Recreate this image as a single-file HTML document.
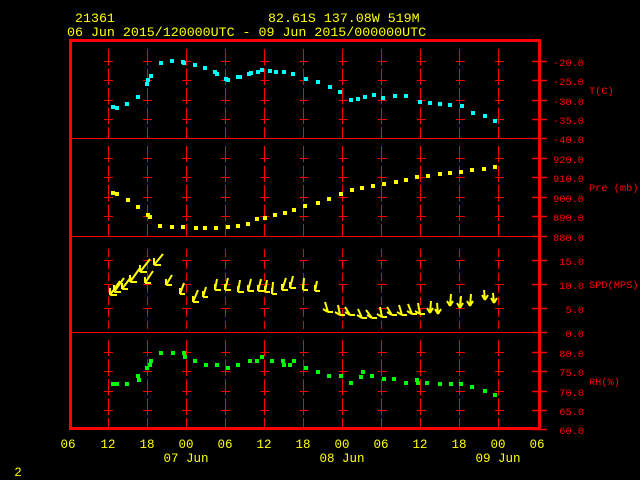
<!DOCTYPE html>
<html><head><meta charset="utf-8"><style>
html,body{margin:0;padding:0;background:#000;width:640px;height:480px;overflow:hidden}
svg{display:block}
text{font-family:"Liberation Mono",monospace}
</style></head><body>
<svg width="640" height="480" viewBox="0 0 640 480" xmlns="http://www.w3.org/2000/svg">
<g fill="#ffff00" font-size="13.3">
<text x="75" y="22">21361</text>
<text x="268" y="22">82.61S  137.08W   519M</text>
<text x="67" y="36">06 Jun 2015/120000UTC - 09 Jun 2015/000000UTC</text>
</g>
<!-- grid -->
<g stroke="#ff0000" stroke-width="1" fill="none">
<path stroke-dasharray="16.5 3" d="M108.5 49V138M147.5 49V138M186.5 49V138M225.5 49V138M264.5 49V138M303.5 49V138M342.5 49V138M381.5 49V138M420.5 49V138M459.5 49V138M498.5 49V138"/>
<path stroke-dasharray="16.5 3" d="M108.5 146V236M147.5 146V236M186.5 146V236M225.5 146V236M264.5 146V236M303.5 146V236M342.5 146V236M381.5 146V236M420.5 146V236M459.5 146V236M498.5 146V236"/>
<path stroke-dasharray="8 4" d="M108.5 249V332M147.5 249V332M186.5 249V332M225.5 249V332M264.5 249V332M303.5 249V332M342.5 249V332M381.5 249V332M420.5 249V332M459.5 249V332M498.5 249V332"/>
<path stroke-dasharray="16.5 3" d="M108.5 340V429M147.5 340V429M186.5 340V429M225.5 340V429M264.5 340V429M303.5 340V429M342.5 340V429M381.5 340V429M420.5 340V429M459.5 340V429M498.5 340V429"/>
<path stroke-dasharray="9 30.1" d="M104 61.5H510M104 80.5H510M104 100.5H510M104 119.5H510M104 158.5H510M104 177.5H510M104 197.5H510M104 216.5H510M104 260.5H510M104 284.5H510M104 308.5H510M104 352.5H510M104 371.5H510M104 391.5H510M104 410.5H510"/>
<path d="M72 138.5H538M72 236.5H538M72 332.5H538"/>
<path stroke-width="1.5" d="M532 61.5H547M532 80.5H547M532 100.5H547M532 119.5H547M532 138.5H547M532 158.5H547M532 177.5H547M532 197.5H547M532 216.5H547M532 236.5H547M532 260.5H547M532 284.5H547M532 308.5H547M532 332.5H547M532 352.5H547M532 371.5H547M532 391.5H547M532 410.5H547M532 429.5H547"/>
</g>
<rect x="70.5" y="40.5" width="469" height="388" fill="none" stroke="#ff0000" stroke-width="3"/>
<!-- right labels -->
<g fill="#ff0000" font-size="10.3" text-anchor="end">
<text x="584" y="66">-20.0</text><text x="584" y="85">-25.0</text><text x="584" y="105">-30.0</text><text x="584" y="124">-35.0</text><text x="584" y="143">-40.0</text>
<text x="584" y="163">920.0</text><text x="584" y="182">910.0</text><text x="584" y="202">900.0</text><text x="584" y="221">890.0</text><text x="584" y="241">880.0</text>
<text x="584" y="265">15.0</text><text x="584" y="289">10.0</text><text x="584" y="313">5.0</text><text x="584" y="337">0.0</text>
<text x="584" y="357">80.0</text><text x="584" y="376">75.0</text><text x="584" y="396">70.0</text><text x="584" y="415">65.0</text><text x="584" y="434">60.0</text>
</g>
<g fill="#ff0000" font-size="10.3">
<text x="589" y="94">T(C)</text><text x="589" y="191">Pre (mb)</text><text x="589" y="288">SPD(MPS)</text><text x="589" y="385">RH(%)</text>
</g>
<!-- bottom labels -->
<g fill="#ffff00" font-size="12.5" text-anchor="middle">
<text x="68" y="448">06</text><text x="108" y="448">12</text><text x="147" y="448">18</text><text x="186" y="448">00</text><text x="225" y="448">06</text><text x="264" y="448">12</text><text x="303" y="448">18</text><text x="342" y="448">00</text><text x="381" y="448">06</text><text x="420" y="448">12</text><text x="459" y="448">18</text><text x="498" y="448">00</text><text x="537" y="448">06</text>
<text x="186" y="462">07 Jun</text><text x="342" y="462">08 Jun</text><text x="498" y="462">09 Jun</text>
<text x="18" y="476">2</text>
</g>
<!-- T -->
<g fill="#00ffff">
<path d="M111 105h4v4h-4zM115 106h4v4h-4zM125 102h4v4h-4zM136 95h4v4h-4zM145 82h4v4h-4zM146 78h4v4h-4zM149 74h4v4h-4zM159 61h4v4h-4zM170 59h4v4h-4zM181 60h4v4h-4zM182 61h4v4h-4zM193 63h4v4h-4zM203 66h4v4h-4zM213 70h4v4h-4zM215 72h4v4h-4zM224 77h4v4h-4zM226 78h4v4h-4zM236 75h4v4h-4zM238 75h4v4h-4zM247 72h4v4h-4zM249 71h4v4h-4zM256 70h4v4h-4zM260 68h4v4h-4zM268 69h4v4h-4zM274 70h4v4h-4zM282 70h4v4h-4zM291 72h4v4h-4zM304 77h4v4h-4zM316 80h4v4h-4zM328 85h4v4h-4zM338 90h4v4h-4zM349 98h4v4h-4zM356 97h4v4h-4zM363 95h4v4h-4zM372 93h4v4h-4zM381 96h4v4h-4zM393 94h4v4h-4zM404 94h4v4h-4zM418 100h4v4h-4zM428 101h4v4h-4zM438 102h4v4h-4zM448 103h4v4h-4zM460 104h4v4h-4zM471 111h4v4h-4zM483 114h4v4h-4zM493 119h4v4h-4z"/>
</g>
<!-- Pre -->
<g fill="#ffff00">
<path d="M111 191h4v4h-4zM115 192h4v4h-4zM126 198h4v4h-4zM136 205h4v4h-4zM146 213h4v4h-4zM148 215h4v4h-4zM158 224h4v4h-4zM170 225h4v4h-4zM181 225h4v4h-4zM194 226h4v4h-4zM203 226h4v4h-4zM214 226h4v4h-4zM226 225h4v4h-4zM236 224h4v4h-4zM246 222h4v4h-4zM255 217h4v4h-4zM263 216h4v4h-4zM273 213h4v4h-4zM283 211h4v4h-4zM292 208h4v4h-4zM303 204h4v4h-4zM316 201h4v4h-4zM327 197h4v4h-4zM339 192h4v4h-4zM350 188h4v4h-4zM360 186h4v4h-4zM371 184h4v4h-4zM382 182h4v4h-4zM394 180h4v4h-4zM404 178h4v4h-4zM415 175h4v4h-4zM426 174h4v4h-4zM438 172h4v4h-4zM448 171h4v4h-4zM459 170h4v4h-4zM470 168h4v4h-4zM482 167h4v4h-4zM493 165h4v4h-4z"/>
</g>
<!-- RH -->
<g fill="#00ff00">
<path d="M111 382h4v4h-4zM115 382h4v4h-4zM125 382h4v4h-4zM136 374h4v4h-4zM137 378h4v4h-4zM145 366h4v4h-4zM148 363h4v4h-4zM149 359h4v4h-4zM159 351h4v4h-4zM171 351h4v4h-4zM182 351h4v4h-4zM183 355h4v4h-4zM193 359h4v4h-4zM204 363h4v4h-4zM215 363h4v4h-4zM226 366h4v4h-4zM236 363h4v4h-4zM248 359h4v4h-4zM255 359h4v4h-4zM260 355h4v4h-4zM270 359h4v4h-4zM281 359h4v4h-4zM282 363h4v4h-4zM288 363h4v4h-4zM292 359h4v4h-4zM304 366h4v4h-4zM316 370h4v4h-4zM327 374h4v4h-4zM339 374h4v4h-4zM349 381h4v4h-4zM359 375h4v4h-4zM361 370h4v4h-4zM370 374h4v4h-4zM382 377h4v4h-4zM392 377h4v4h-4zM404 381h4v4h-4zM415 378h4v4h-4zM416 381h4v4h-4zM425 381h4v4h-4zM438 382h4v4h-4zM449 382h4v4h-4zM459 382h4v4h-4zM470 385h4v4h-4zM483 389h4v4h-4zM493 393h4v4h-4z"/>
</g>
<!-- wind arrows -->
<g stroke="#ffff00" stroke-width="2" fill="none">
<path d="M110 295l10 -14M110 295h7M110 295v-7 M114 292l10 -14M114 292h7M114 292v-7 M122 289l9 -12M122 289h6M122 289v-6 M130 282l10 -14M130 282h7M130 282v-7 M140 272l10 -13M140 272h7M140 272v-7 M145 283l8 -12M145 283h6M145 283v-6 M154 265l9 -11M154 265h7M154 265v-7 M166 285l6 -10M166 285h6M166 285v-6 M180 294l4 -11M180 294h5M180 294v-6 M193 302l5 -12M193 302h6M193 302v-6 M203 297l3 -10M203 297h5M203 297v-6 M215 290l2 -11M215 290h6M215 290v-6 M225 290l3 -12M225 290h6M225 290v-6 M238 292l2 -12M238 292h6M238 292v-6 M248 291l3 -12M248 291h6M248 291v-6 M258 291l3 -12M258 291h6M258 291v-6 M265 292l2 -12M265 292h5M265 292v-6 M272 294l1 -12M272 294h5M272 294v-6 M282 290l4 -12M282 290h6M282 290v-6 M290 288l3 -12M290 288h6M290 288v-6 M303 290l1 -12M303 290h5M303 290v-6 M315 291l2 -10M315 291h5M315 291v-6 M328 312l-3 -10M328 312h5M328 312l-5 -3 M340 315l-2 -10M340 315h5M340 315l-5 -3 M350 315l-5 -8M350 315h5M350 315l-5 -3 M362 318l-4 -9M362 318h5M362 318l-5 -3 M372 318l-6 -8M372 318h5M372 318l-5 -3 M382 317l-2 -10M382 317h5M382 317l-5 -3 M392 315l-5 -8M392 315h5M392 315l-5 -3 M402 315l-3 -10M402 315h5M402 315l-5 -3 M412 314l-4 -10M412 314h5M412 314l-5 -3 M420 314l-2 -11M420 314h5M420 314l-5 -3 M430 313l1 -12M430 313l3 -5M430 313l-3 -5 M438 314l-1 -11M438 314l3 -5M438 314l-3 -5 M450 306l1 -12M450 306l3 -5M450 306l-3 -5 M460 308l1 -12M460 308l3 -5M460 308l-3 -5 M470 306l1 -12M470 306l3 -5M470 306l-3 -5 M485 300l-1 -10M485 300l3 -5M485 300l-3 -5 M494 303l-1 -10M494 303l3 -5M494 303l-3 -5"/>
</g>
</svg>
</body></html>
